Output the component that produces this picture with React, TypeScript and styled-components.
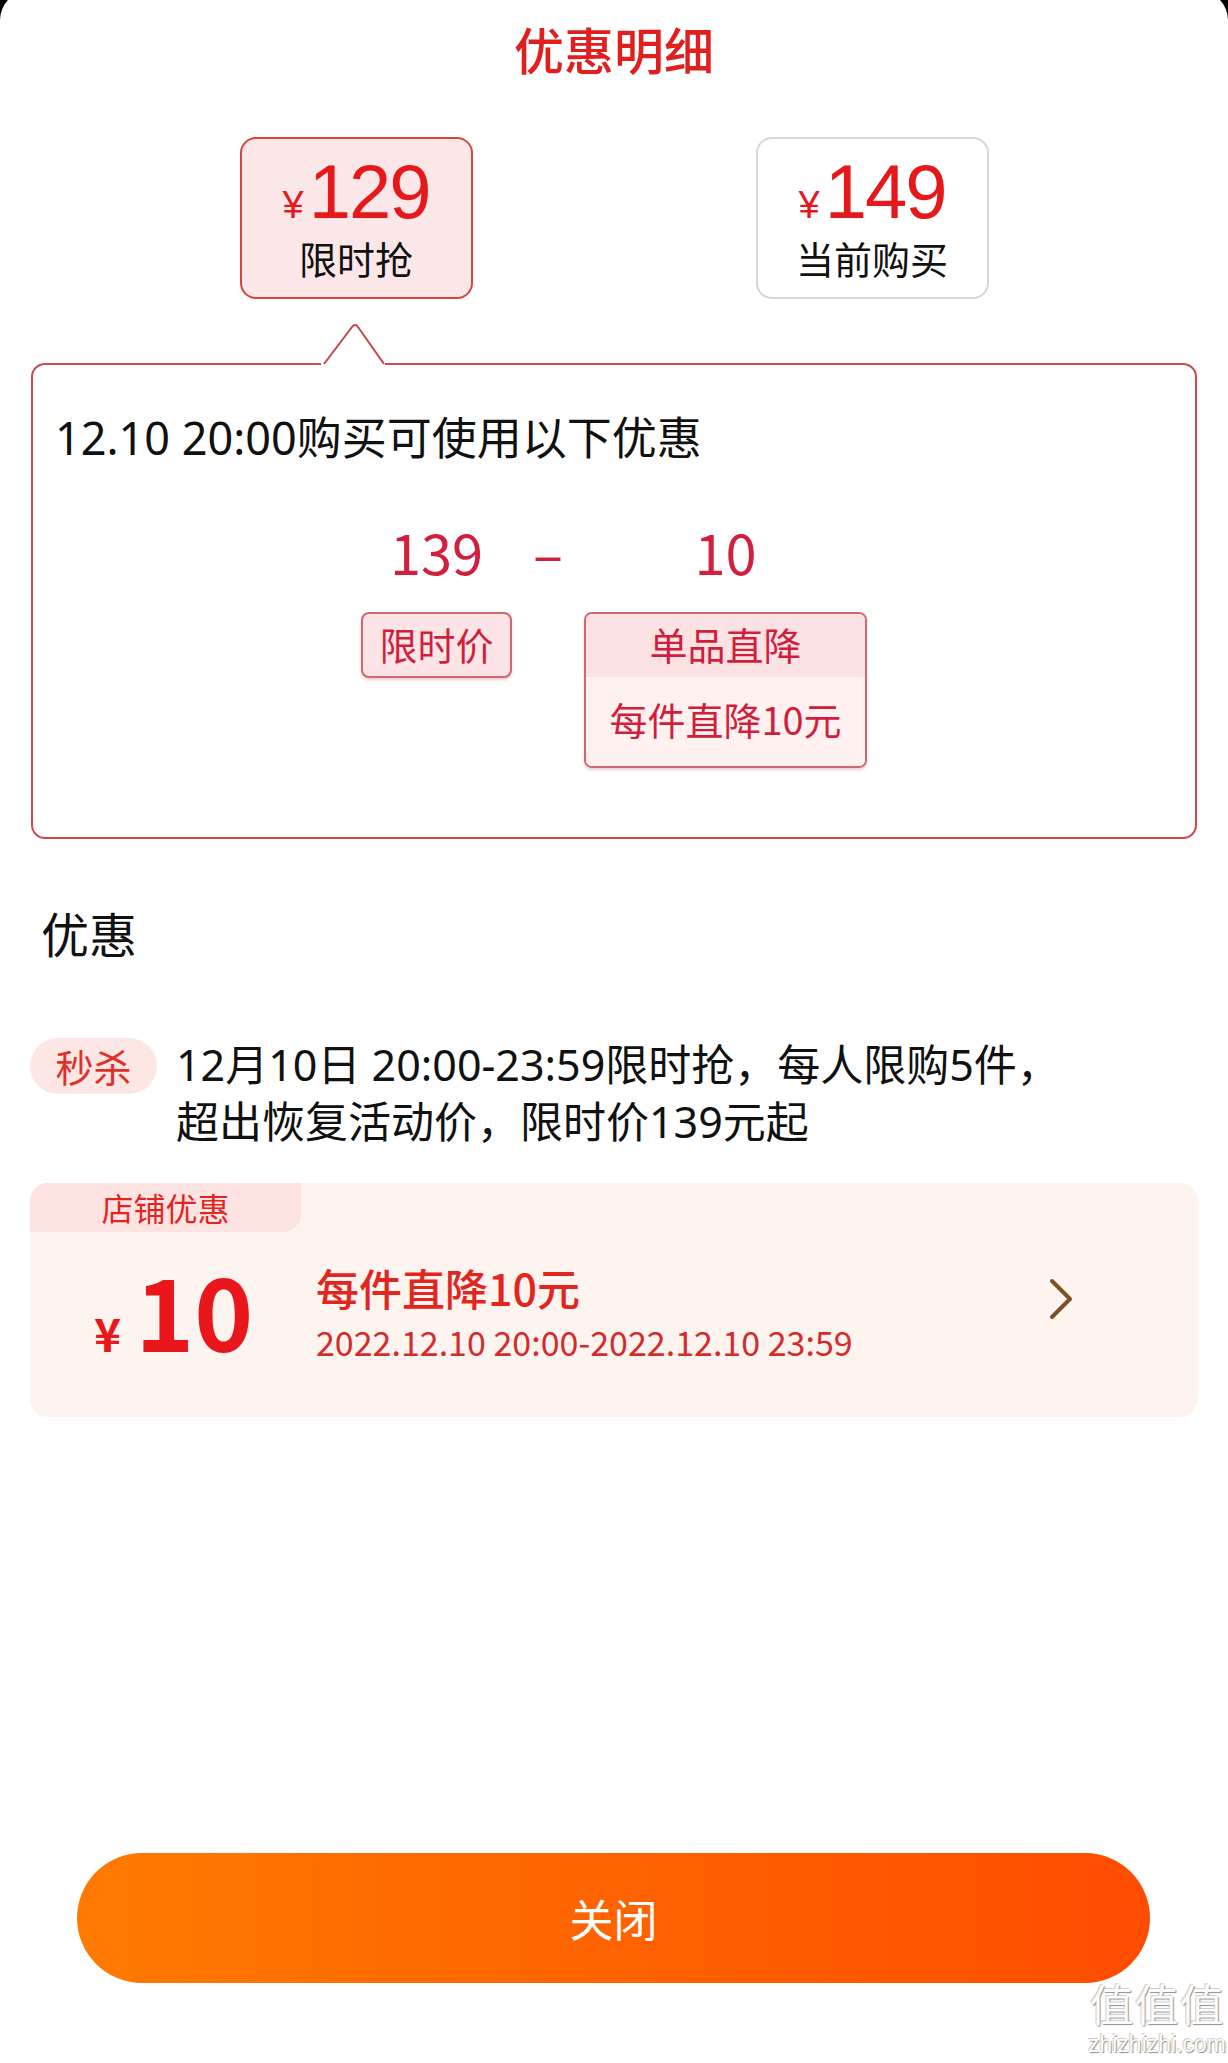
import React from 'react';
import styled, { createGlobalStyle } from 'styled-components';

const FONT = `"Noto Sans CJK SC", "Noto Sans", "Liberation Sans", sans-serif`;
const TEXT_FONT = `"Noto Sans", "Noto Sans CJK SC", sans-serif`;
const TIGHT_FONT = `"Liberation Sans", "Noto Sans CJK SC", sans-serif`;

const Global = createGlobalStyle`
  html, body { margin: 0; padding: 0; background: #000; }
  body { font-family: ${FONT}; -webkit-font-smoothing: antialiased; }
  * { box-sizing: border-box; }
  #root { display: flow-root; }
`;

const Page = styled.div`
  display: flow-root;
  width: 1228px;
  height: 2063px;
  overflow: hidden;
  background: #000;
`;

const Sheet = styled.div`
  position: relative;
  width: 1228px;
  height: 2072px;
  margin-top: -9px;
  padding-top: 9px;
  background: #fff;
  border-radius: 29px 29px 0 0;
  display: flex;
  flex-direction: column;
`;

const Title = styled.h1`
  margin: 0 0 41px;
  height: 96px;
  line-height: 96px;
  font-size: 50px;
  font-weight: 500;
  color: #e01f1f;
  text-align: center;
`;

const PriceRow = styled.div`
  display: flex;
  justify-content: center;
  gap: 283px;
`;

const PriceCard = styled.div<{ $active?: boolean }>`
  width: 233px;
  height: 162px;
  border-radius: 16px;
  border: 2px solid ${(p) => (p.$active ? '#d5463f' : '#d6d6d6')};
  background: ${(p) => (p.$active ? '#fbe7e7' : '#fff')};
  display: flex;
  flex-direction: column;
  align-items: center;
  padding-top: 15px;
  font-family: ${TIGHT_FONT};
`;

const PriceLine = styled.div`
  display: flex;
  align-items: baseline;
  color: #e5191c;
  height: 76px;
  line-height: 76px;
  margin-bottom: 12px;
`;

const Yen = styled.span`
  font-size: 38px;
  margin-right: 5px;
`;

const PriceNum = styled.span`
  font-size: 76px;
  letter-spacing: -2px;
`;

const PriceLabel = styled.div`
  font-size: 38px;
  line-height: 38px;
  color: #111;
`;

const Callout = styled.section`
  position: relative;
  margin: 64px 31px 0;
  height: 476px;
  border: 2px solid #cd4a4d;
  border-radius: 14px;
  padding: 50px 22px 0;
`;

const Pointer = styled.svg`
  position: absolute;
  left: 288px;
  top: -42px;
  overflow: visible;
`;

const CalloutText = styled.p`
  margin: 0;
  font-family: ${TEXT_FONT};
  font-size: 45px;
  line-height: 45px;
  color: #111;
`;

const Calc = styled.div`
  display: flex;
  justify-content: center;
  margin-top: 63px;
`;

const CalcCol = styled.div<{ $w: number }>`
  width: ${(p) => p.$w}px;
  display: flex;
  flex-direction: column;
  align-items: center;
`;

const CalcNum = styled.div`
  font-size: 56px;
  line-height: 56px;
  height: 56px;
  color: #d21f3e;
  margin-bottom: 33px;
`;

const Tag = styled.div`
  width: 151px;
  height: 66px;
  border: 2px solid #cf6870;
  border-radius: 8px;
  background: #fde5e7;
  color: #d01f3c;
  font-size: 38px;
  line-height: 60px;
  text-align: center;
  box-shadow: 0 2px 3px rgba(190, 60, 70, 0.25);
`;

const DiscountTag = styled.div`
  width: 283px;
  height: 156px;
  border: 2px solid #cf6870;
  border-radius: 8px;
  overflow: hidden;
  display: flex;
  flex-direction: column;
  color: #d01f3c;
  font-size: 38px;
  text-align: center;
  box-shadow: 0 2px 3px rgba(190, 60, 70, 0.25);
`;

const DiscountHead = styled.div`
  height: 63px;
  line-height: 60px;
  background: #fde2e4;
`;

const DiscountBody = styled.div`
  flex: 1;
  line-height: 84px;
  background: #fff1f0;
`;

const SectionTitle = styled.h2`
  margin: 69px 0 0 41px;
  font-size: 48px;
  line-height: 48px;
  font-weight: 400;
  color: #111;
`;

const PromoRow = styled.div`
  display: flex;
  align-items: flex-start;
  gap: 19px;
  margin-top: 80px;
  padding-left: 30px;
`;

const Pill = styled.span`
  flex-shrink: 0;
  width: 127px;
  height: 56px;
  margin-top: 2px;
  border-radius: 28px;
  background: #fde7e5;
  color: #e0302a;
  font-size: 38px;
  line-height: 56px;
  text-align: center;
`;

const PromoText = styled.p`
  margin: 0;
  font-family: ${TEXT_FONT};
  font-size: 43px;
  line-height: 57px;
  color: #111;
`;

const Card = styled.div`
  margin: 33px 30px 0;
  height: 234px;
  border-radius: 18px;
  background: #fdf4ef;
  overflow: hidden;
`;

const CardTag = styled.div`
  width: 271px;
  height: 49px;
  border-radius: 0 0 18px 0;
  background: #fde3e2;
  color: #e2261f;
  font-size: 32px;
  line-height: 49px;
  text-align: center;
`;

const CardBody = styled.div`
  height: 160px;
  display: flex;
  align-items: center;
  padding-left: 64px;
`;

const Amount = styled.div`
  width: 222px;
  display: flex;
  align-items: baseline;
  color: #e9161c;
  font-weight: 700;
`;

const AmountYen = styled.span`
  font-size: 46px;
  margin-right: 14px;
`;

const AmountNum = styled.span`
  font-size: 100px;
  line-height: 1;
`;

const Info = styled.div`
  flex: 1;
  display: flex;
  flex-direction: column;
`;

const InfoTitle = styled.div`
  font-size: 43px;
  line-height: 50px;
  font-weight: 500;
  color: #e1261f;
`;

const InfoDate = styled.div`
  margin-top: 9px;
  font-size: 34px;
  line-height: 42px;
  color: #d42c2c;
`;

const Chevron = styled.svg`
  margin: 0 124px 26px 0;
  flex-shrink: 0;
`;

const CloseButton = styled.button`
  margin: 436px 78px 0 77px;
  height: 130px;
  border: none;
  border-radius: 65px;
  background: linear-gradient(90deg, #ff7a00 0%, #ff4c00 100%);
  color: #fff;
  font-family: ${FONT};
  font-size: 44px;
  display: flex;
  align-items: center;
  justify-content: center;
`;

const Watermark = styled.div`
  position: absolute;
  right: 2px;
  bottom: 8px;
  display: flex;
  flex-direction: column;
  align-items: center;
  font-family: ${TIGHT_FONT};
  color: #fbfbfb;
  text-shadow: 1px 1px 1px #8f8f8f, -1px -1px 0 #cfcfcf;
`;

const WatermarkBig = styled.span`
  font-size: 44px;
  line-height: 44px;
  letter-spacing: 1px;
`;

const WatermarkSmall = styled.span`
  margin-top: 4px;
  font-size: 23px;
  line-height: 22px;
`;

export default function App() {
  return (
    <>
      <Global />
      <Page>
        <Sheet>
          <Title>优惠明细</Title>
          <PriceRow>
            <PriceCard $active>
              <PriceLine>
                <Yen>¥</Yen>
                <PriceNum>129</PriceNum>
              </PriceLine>
              <PriceLabel>限时抢</PriceLabel>
            </PriceCard>
            <PriceCard>
              <PriceLine>
                <Yen>¥</Yen>
                <PriceNum>149</PriceNum>
              </PriceLine>
              <PriceLabel>当前购买</PriceLabel>
            </PriceCard>
          </PriceRow>

          <Callout>
            <Pointer width="66" height="44" viewBox="0 0 66 44">
              <path d="M0 39 L64 39 L64 44 L0 44 Z" fill="#fff" />
              <path d="M3 41 L31 4 Q34 0 37 4 L63 41 Z" fill="#fff" />
              <path
                d="M3 41 L31 4 Q34 0 37 4 L63 41"
                fill="none"
                stroke="#c4454a"
                strokeWidth="2"
                strokeLinejoin="round"
              />
            </Pointer>
            <CalloutText>12.10 20:00购买可使用以下优惠</CalloutText>
            <Calc>
              <CalcCol $w={151}>
                <CalcNum>139</CalcNum>
                <Tag>限时价</Tag>
              </CalcCol>
              <CalcCol $w={72}>
                <CalcNum>–</CalcNum>
              </CalcCol>
              <CalcCol $w={283}>
                <CalcNum>10</CalcNum>
                <DiscountTag>
                  <DiscountHead>单品直降</DiscountHead>
                  <DiscountBody>每件直降10元</DiscountBody>
                </DiscountTag>
              </CalcCol>
            </Calc>
          </Callout>

          <SectionTitle>优惠</SectionTitle>
          <PromoRow>
            <Pill>秒杀</Pill>
            <PromoText>
              12月10日 20:00-23:59限时抢，每人限购5件，
              <br />
              超出恢复活动价，限时价139元起
            </PromoText>
          </PromoRow>

          <Card>
            <CardTag>店铺优惠</CardTag>
            <CardBody>
              <Amount>
                <AmountYen>¥</AmountYen>
                <AmountNum>10</AmountNum>
              </Amount>
              <Info>
                <InfoTitle>每件直降10元</InfoTitle>
                <InfoDate>2022.12.10 20:00-2022.12.10 23:59</InfoDate>
              </Info>
              <Chevron width="26" height="42" viewBox="0 0 26 42">
                <path
                  d="M4 3 L22 21 L4 39"
                  fill="none"
                  stroke="#7d5128"
                  strokeWidth="4"
                  strokeLinecap="round"
                  strokeLinejoin="round"
                />
              </Chevron>
            </CardBody>
          </Card>

          <CloseButton>关闭</CloseButton>

          <Watermark>
            <WatermarkBig>值值值</WatermarkBig>
            <WatermarkSmall>zhizhizhi.com</WatermarkSmall>
          </Watermark>
        </Sheet>
      </Page>
    </>
  );
}
